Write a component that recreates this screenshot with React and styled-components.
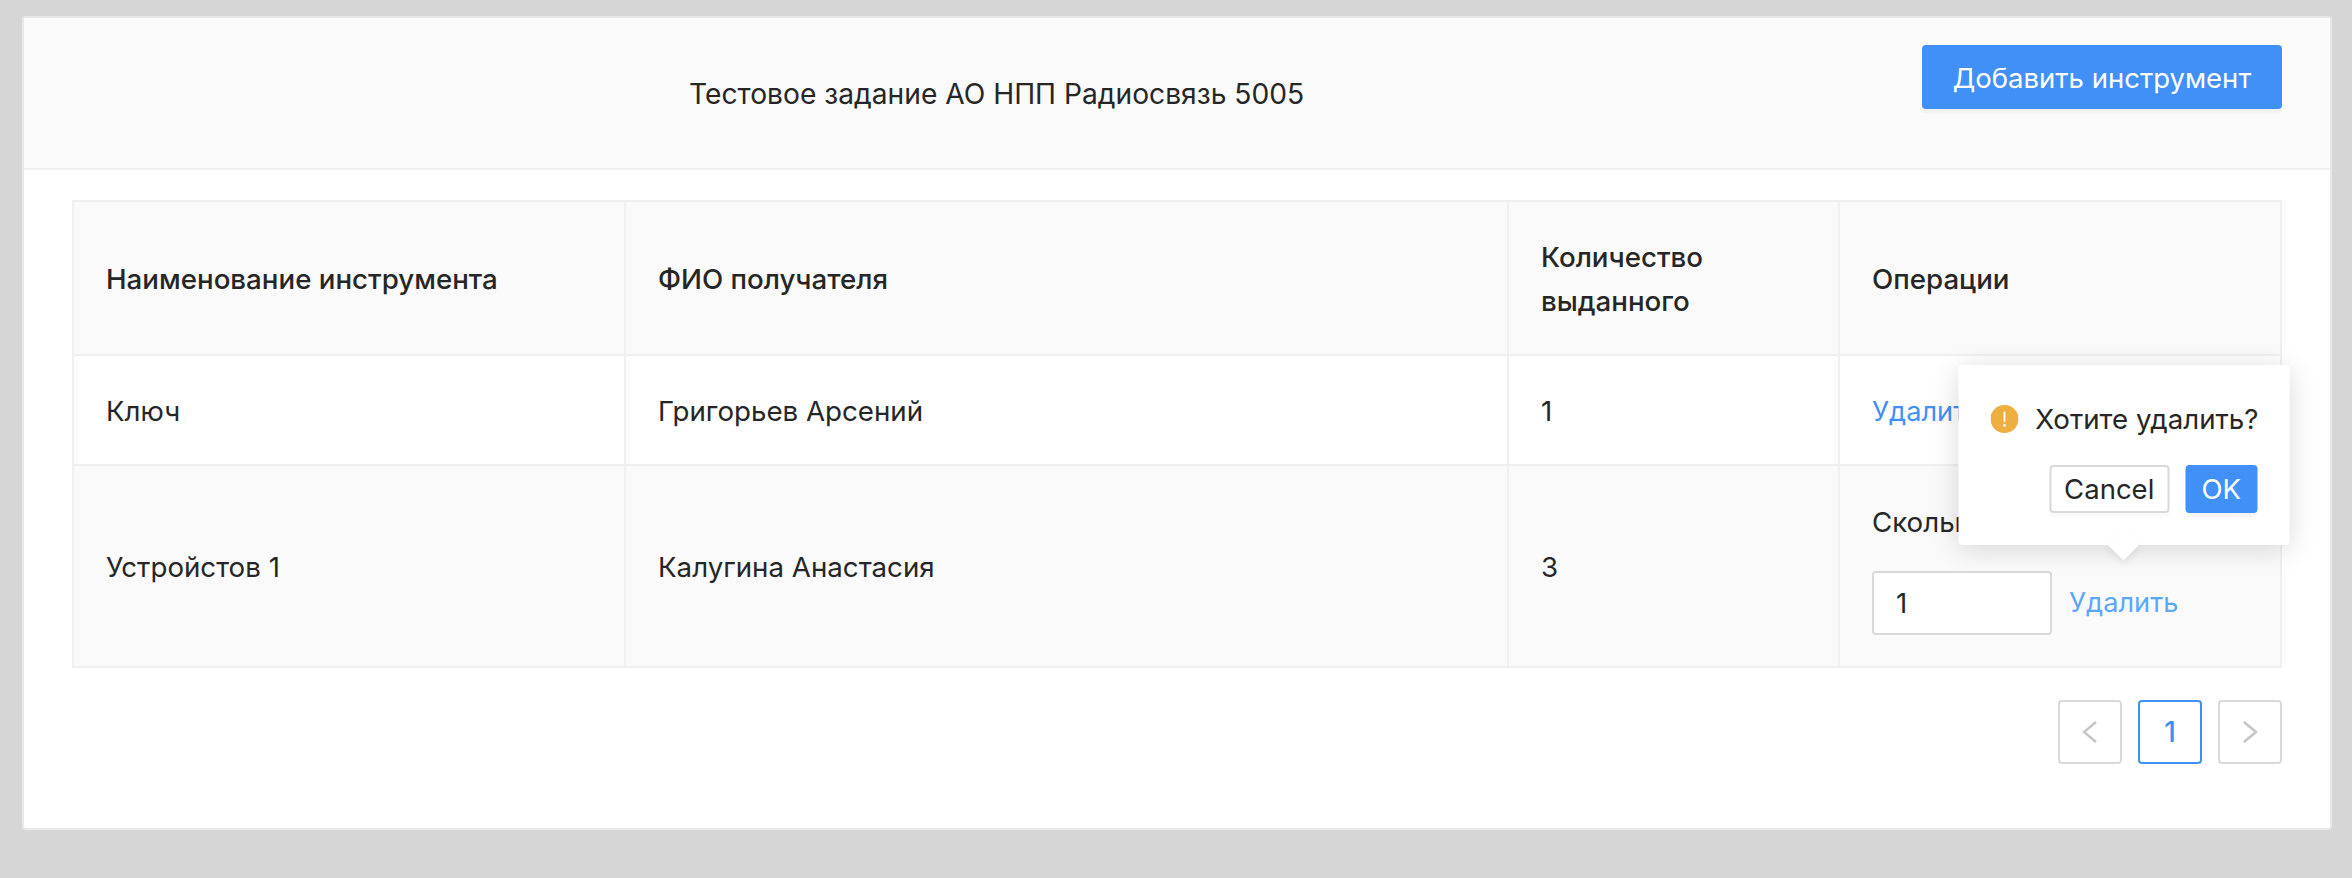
import React from "react";
import styled, { createGlobalStyle } from "styled-components";

const Global = createGlobalStyle`
  html, body { margin: 0; padding: 0; background: #d6d6d6; }
  body { font-family: Inter, "Noto Sans", sans-serif; color: #262626; }
`;
const Page = styled.div`
  box-sizing: border-box;
  height: 878px;
  padding: 16px 20px 48px 22px;
`;
const Card = styled.div`
  box-sizing: border-box;
  height: 814px;
  background: #fff;
  border: 2px solid #e8e8e8;
  border-radius: 4px;
`;
const Header = styled.header`
  box-sizing: border-box;
  height: 152px;
  display: flex;
  align-items: flex-start;
  justify-content: space-between;
  padding: 27px 48px 0 665px;
  background: #fafafa;
  border-bottom: 2px solid #f0f0f0;
`;
const Title = styled.h1`
  margin: 0;
  padding-top: 27px;
  font-size: 28.2px;
  line-height: 44px;
  font-weight: 400;
`;
const PrimaryButton = styled.button`
  box-sizing: border-box;
  height: 64px;
  width: 360px;
  padding: 2px 0 0;
  border: 0;
  border-radius: 4px;
  background: #4190f7;
  color: #fff;
  font: 400 27.5px Inter, sans-serif;
  box-shadow: 0 4px 0 rgba(0, 0, 0, 0.03);
`;
const Body = styled.div`
  padding: 30px 48px 0;
`;
const Table = styled.table`
  width: 2210px;
  table-layout: fixed;
  border-collapse: separate;
  border-spacing: 0;
  border-top: 2px solid #f0f0f0;
  border-left: 2px solid #f0f0f0;
  font-size: 27.7px;
  line-height: 44px;
`;
const Th = styled.th`
  box-sizing: border-box;
  height: 154px;
  padding: 2px 32px 0;
  text-align: left;
  font-weight: 450;
  background: #fafafa;
  border-right: 2px solid #f0f0f0;
  border-bottom: 2px solid #f0f0f0;
`;
const Td = styled.td`
  box-sizing: border-box;
  height: ${(p) => p.$h}px;
  padding: 2px 32px 0;
  background: ${(p) => (p.$alt ? "#fafafa" : "#fff")};
  border-right: 2px solid #f0f0f0;
  border-bottom: 2px solid #f0f0f0;
`;
const Link = styled.a`
  font-size: 27.2px;
  color: ${(p) => (p.$soft ? "#5aa7fb" : "#4190f7")};
`;
const QtyLabel = styled.div`
  margin-bottom: 27px;
  white-space: nowrap;
`;
const QtyRow = styled.div`
  display: flex;
  align-items: center;
  gap: 17px;
`;
const QtyInput = styled.input`
  box-sizing: border-box;
  width: 180px;
  height: 64px;
  padding: 0 22px;
  border: 2px solid #d9d9d9;
  border-radius: 4px;
  background: #fff;
  color: #262626;
  font: 400 27.7px Inter, sans-serif;
  outline: none;
`;
const Anchor = styled.span`
  position: relative;
  display: inline-block;
`;
const Popover = styled.div`
  position: absolute;
  bottom: calc(100% + 35px);
  left: 50%;
  transform: translateX(-50%);
  box-sizing: border-box;
  width: 331px;
  height: 180px;
  padding: 32px 32px 0;
  border-radius: 4px;
  background: #fff;
  box-shadow: 0 4px 28px rgba(0, 0, 0, 0.15);
  &::after {
    content: "";
    position: absolute;
    left: 50%;
    bottom: -11px;
    width: 22px;
    height: 22px;
    background: #fff;
    transform: translateX(-50%) rotate(45deg);
    box-shadow: 3px 3px 7px rgba(0, 0, 0, 0.07);
  }
`;
const Message = styled.div`
  display: flex;
  align-items: center;
  gap: 17px;
  height: 44px;
  white-space: nowrap;
`;
const Actions = styled.div`
  display: flex;
  justify-content: flex-end;
  gap: 16px;
  margin-top: 24px;
`;
const CancelButton = styled.button`
  box-sizing: border-box;
  width: 120px;
  height: 48px;
  padding: 0;
  border: 2px solid #d9d9d9;
  border-radius: 4px;
  background: #fff;
  color: #262626;
  font: 400 27.5px Inter, sans-serif;
  box-shadow: 0 4px 0 rgba(0, 0, 0, 0.02);
`;
const OkButton = styled(PrimaryButton)`
  width: 72px;
  height: 48px;
  padding: 0;
`;
const Pagination = styled.nav`
  display: flex;
  justify-content: flex-end;
  gap: 16px;
  margin-top: 32px;
`;
const PageItem = styled.div`
  box-sizing: border-box;
  width: 64px;
  height: 64px;
  display: flex;
  align-items: center;
  justify-content: center;
  border: 2px solid ${(p) => (p.$active ? "#4190f7" : "#d9d9d9")};
  border-radius: 4px;
  color: #4190f7;
  font-size: 28px;
  font-weight: 500;
`;

const Warn = () => (
  <svg width="28" height="28" viewBox="0 0 28 28" style={{ flex: "none" }}>
    <circle cx="14" cy="14" r="14" fill="#efae41" />
    <rect x="13" y="6.5" width="2" height="10.5" rx="1" fill="#fff" />
    <circle cx="14" cy="20.5" r="1.4" fill="#fff" />
  </svg>
);
const Chevron = ({ dir }) => (
  <svg width="16" height="24" viewBox="0 0 16 24" fill="none" stroke="#c4c4c4" strokeWidth="2.4">
    <path d={dir === "left" ? "M14 2 L2 12 L14 22" : "M2 2 L14 12 L2 22"} />
  </svg>
);

export default function App() {
  return (
    <Page>
      <Global />
      <Card>
        <Header>
          <Title>Тестовое задание АО НПП Радиосвязь 5005</Title>
          <PrimaryButton>Добавить инструмент</PrimaryButton>
        </Header>
        <Body>
          <Table>
            <colgroup>
              <col style={{ width: 552 }} />
              <col style={{ width: 883 }} />
              <col style={{ width: 331 }} />
              <col />
            </colgroup>
            <thead>
              <tr>
                <Th>Наименование инструмента</Th>
                <Th>ФИО получателя</Th>
                <Th>Количество выданного</Th>
                <Th>Операции</Th>
              </tr>
            </thead>
            <tbody>
              <tr>
                <Td $h={110}>Ключ</Td>
                <Td $h={110}>Григорьев Арсений</Td>
                <Td $h={110}>1</Td>
                <Td $h={110}><Link>Удалить</Link></Td>
              </tr>
              <tr>
                <Td $h={202} $alt>Устройстов 1</Td>
                <Td $h={202} $alt>Калугина Анастасия</Td>
                <Td $h={202} $alt>3</Td>
                <Td $h={202} $alt>
                  <QtyLabel>Сколько выдать?</QtyLabel>
                  <QtyRow>
                    <QtyInput defaultValue="1" />
                    <Anchor>
                      <Link $soft>Удалить</Link>
                      <Popover>
                        <Message><Warn />Хотите удалить?</Message>
                        <Actions>
                          <CancelButton>Cancel</CancelButton>
                          <OkButton>OK</OkButton>
                        </Actions>
                      </Popover>
                    </Anchor>
                  </QtyRow>
                </Td>
              </tr>
            </tbody>
          </Table>
          <Pagination>
            <PageItem><Chevron dir="left" /></PageItem>
            <PageItem $active>1</PageItem>
            <PageItem><Chevron dir="right" /></PageItem>
          </Pagination>
        </Body>
      </Card>
    </Page>
  );
}
